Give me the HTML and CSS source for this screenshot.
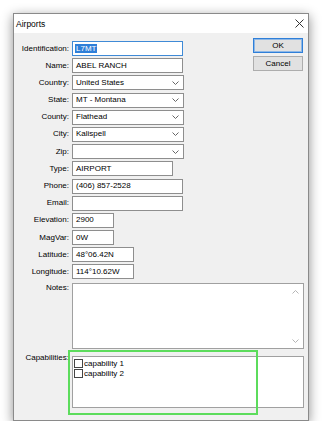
FILE: index.html
```html
<!DOCTYPE html>
<html>
<head>
<meta charset="utf-8">
<link rel="stylesheet" href="styles.css">
</head>
<body>
<div class="window">
  <div class="titlebar">
    <span class="title">Airports</span>
    <svg class="close" width="9" height="9" viewBox="0 0 9 9"><path d="M0.5 0.5 L8.5 8.5 M8.5 0.5 L0.5 8.5" stroke="#333" stroke-width="1" fill="none"/></svg>
  </div>
  <div class="content">
    <div class="lbl">Identification:</div>
    <div class="tb focus w111"><span class="sel">L7MT</span></div>
    <div class="buttons">
      <div class="btn default">OK</div>
      <div class="btn">Cancel</div>
    </div>

    <div class="lbl">Name:</div>
    <div class="tb w111">ABEL RANCH</div>

    <div class="lbl">Country:</div>
    <div class="tb combo w112"><span>United States</span><svg width="7" height="4" viewBox="0 0 7 4"><polyline points="0.5,0.5 3.5,3.5 6.5,0.5" fill="none" stroke="#666" stroke-width="1"/></svg></div>

    <div class="lbl">State:</div>
    <div class="tb combo w112"><span>MT - Montana</span><svg width="7" height="4" viewBox="0 0 7 4"><polyline points="0.5,0.5 3.5,3.5 6.5,0.5" fill="none" stroke="#666" stroke-width="1"/></svg></div>

    <div class="lbl">County:</div>
    <div class="tb combo w112"><span>Flathead</span><svg width="7" height="4" viewBox="0 0 7 4"><polyline points="0.5,0.5 3.5,3.5 6.5,0.5" fill="none" stroke="#666" stroke-width="1"/></svg></div>

    <div class="lbl">City:</div>
    <div class="tb combo w112"><span>Kalispell</span><svg width="7" height="4" viewBox="0 0 7 4"><polyline points="0.5,0.5 3.5,3.5 6.5,0.5" fill="none" stroke="#666" stroke-width="1"/></svg></div>

    <div class="lbl">Zip:</div>
    <div class="tb combo w112"><span></span><svg width="7" height="4" viewBox="0 0 7 4"><polyline points="0.5,0.5 3.5,3.5 6.5,0.5" fill="none" stroke="#666" stroke-width="1"/></svg></div>

    <div class="lbl">Type:</div>
    <div class="tb w101">AIRPORT</div>

    <div class="lbl">Phone:</div>
    <div class="tb w111">(406) 857-2528</div>

    <div class="lbl">Email:</div>
    <div class="tb w111"></div>

    <div class="lbl">Elevation:</div>
    <div class="tb w42">2900</div>

    <div class="lbl">MagVar:</div>
    <div class="tb w42">0W</div>

    <div class="lbl">Latitude:</div>
    <div class="tb w62">48°06.42N</div>

    <div class="lbl">Longitude:</div>
    <div class="tb w62">114°10.62W</div>

    <div class="lbl top notes-lbl">Notes:</div>
    <div class="notes">
      <div class="sb">
        <svg width="7" height="4" viewBox="0 0 7 4"><polyline points="0.5,3.5 3.5,0.5 6.5,3.5" fill="none" stroke="#b5b5b5" stroke-width="1"/></svg>
        <svg width="7" height="4" viewBox="0 0 7 4"><polyline points="0.5,0.5 3.5,3.5 6.5,0.5" fill="none" stroke="#b5b5b5" stroke-width="1"/></svg>
      </div>
    </div>

    <div class="lbl top caps-lbl">Capabilities:</div>
    <div class="caps">
      <div class="cb-row"><span class="cb"></span><span>capability 1</span></div>
      <div class="cb-row"><span class="cb"></span><span>capability 2</span></div>
      <div class="hl"></div>
    </div>
  </div>
</div>
</body>
</html>
```
FILE: styles.css
```css
html, body {
  margin: 0;
  background: #fff;
}
body {
  padding: 13px 0 0 13px;
  font-family: "Liberation Sans", Arial, sans-serif;
  font-size: 8px;
  color: #000;
}
.window {
  width: 294px;
  height: 406px;
  border: 1px solid #8a8a8a;
  background: #f0f0f0;
  box-shadow: 0 3px 11px rgba(0, 0, 0, 0.45);
  display: flex;
  flex-direction: column;
}
.titlebar {
  height: 19px;
  background: #fff;
  display: flex;
  align-items: center;
  justify-content: space-between;
  padding: 0 4px 0 2px;
  flex: none;
}
.title {
  font-size: 8.5px;
  color: #000;
}
.content {
  flex: 1;
  padding: 8px 4px 5px 0;
  display: grid;
  grid-template-columns: 55px 115px 1fr;
  grid-template-rows: repeat(14, 15px) 67px 57px;
  column-gap: 3px;
  row-gap: 2.2px;
  align-content: start;
  line-height: 10px;
}
.lbl {
  grid-column: 1;
  text-align: right;
  align-self: center;
  white-space: nowrap;
  color: #000;
}
.lbl.top {
  align-self: start;
}
.notes-lbl {
  margin-top: 1px;
}
.caps-lbl {
  margin-top: 2px;
}
.tb {
  grid-column: 2;
  box-sizing: border-box;
  height: 15px;
  background: #fff;
  border: 1px solid #8e8e8e;
  display: flex;
  align-items: center;
  padding-left: 3px;
  white-space: nowrap;
  color: #000;
}
.tb.focus {
  border-color: #3f8ad6;
  padding-left: 2px;
}
.sel {
  background: #2f7fd8;
  color: #fff;
  padding: 0 1px;
  line-height: 9px;
}
.combo {
  justify-content: space-between;
  padding-right: 4px;
}
.w111 { width: 111px; }
.w112 { width: 112px; }
.w101 { width: 101px; }
.w42 { width: 42px; }
.w62 { width: 62px; }
.buttons {
  grid-column: 3;
  grid-row: 1 / span 2;
  justify-self: end;
  display: flex;
  flex-direction: column;
  gap: 3px;
  margin-top: -3px;
  margin-right: 1px;
}
.btn {
  box-sizing: border-box;
  width: 50px;
  height: 15px;
  background: #e1e1e1;
  border: 1px solid #adadad;
  display: flex;
  align-items: center;
  justify-content: center;
  color: #000;
}
.btn.default {
  border-color: #2f7fd8;
  box-shadow: inset 0 0 0 1px #8fb8e6;
}
.notes {
  grid-column: 2 / 4;
  margin-top: 1px;
  box-sizing: border-box;
  background: #fff;
  border: 1px solid #a0a0a0;
  display: flex;
  justify-content: flex-end;
}
.sb {
  width: 15px;
  display: flex;
  flex-direction: column;
  justify-content: space-between;
  align-items: center;
  padding: 6px 0 5px;
  box-sizing: border-box;
}
.caps {
  grid-column: 2 / 4;
  margin-top: 5px;
  box-sizing: border-box;
  background: #fff;
  border: 1px solid #a0a0a0;
  padding: 2px 1px;
  position: relative;
}
.cb-row {
  display: flex;
  align-items: center;
  height: 10px;
  gap: 1px;
  color: #000;
}
.cb {
  width: 9px;
  height: 9px;
  box-sizing: border-box;
  border: 1px solid #444;
  background: #fff;
}
.hl {
  position: absolute;
  left: -5px;
  top: -7px;
  width: 190px;
  height: 65px;
  box-sizing: border-box;
  border: 2px solid #5cdc5c;
}
```
